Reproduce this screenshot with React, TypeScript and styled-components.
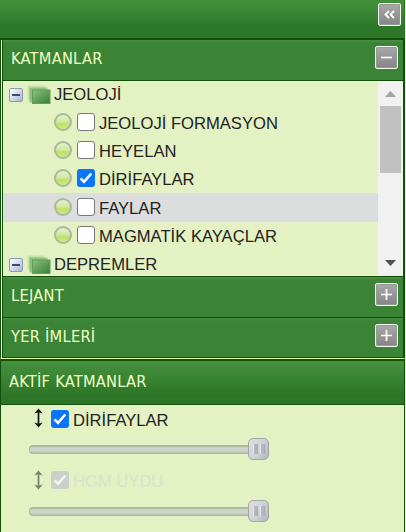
import React from 'react';
import styled, { createGlobalStyle } from 'styled-components';

const Global = createGlobalStyle`
  * { box-sizing: border-box; }
  body { margin: 0; background: #e3f1c3; overflow: hidden; }
`;

const Sidebar = styled.div`
  width: 406px;
  height: 532px;
  display: flex;
  flex-direction: column;
  background: #e3f1c3;
  font-family: "Liberation Sans", Arial, sans-serif;
  color: #222;
  padding-right: 1px;
  overflow: hidden;
`;

const TopBar = styled.header`
  flex: 0 0 40px;
  display: flex;
  justify-content: flex-end;
  padding: 3px 3px 0 0;
  border-bottom: 2px solid #134f08;
  border-right: 1px solid #2b7023;
  background: linear-gradient(#43903b 0, #3a8534 14px, #2d7728 26px, #2d7728 100%);
`;

const Accordion = styled.section`
  flex: 0 0 319px;
  display: flex;
  flex-direction: column;
  border-left: 1px solid #12500a;
  border-right: 1px solid #12500a;
  padding-left: 1px;
  border-bottom: 1px solid #e2ffab;
  background: #e2ffab;
`;

const Section = styled.div<{ $h: number }>`
  flex: 0 0 ${p => p.$h}px;
  display: flex;
  flex-direction: column;
  border: solid #12500a;
  border-width: 0 1px 1px 1px;
`;

const SectionHeader = styled.div<{ $h: number }>`
  flex: 0 0 ${p => p.$h}px;
  display: flex;
  align-items: flex-start;
  justify-content: space-between;
  padding: 6px 5px 0 8px;
  background: linear-gradient(#499044 0, #3b8335 3px, #3b8335 100%);
`;

const Title = styled.h2`
  margin: 0;
  font: 400 16.3px/25px "DejaVu Sans Condensed", "DejaVu Sans", sans-serif;
  font-stretch: condensed;
  letter-spacing: 0.25px;
  color: #efffc5;
  white-space: nowrap;
`;

const ToolButton = styled.button`
  width: 23px;
  height: 23px;
  padding: 0;
  border: 1px solid #f4f7f2;
  border-radius: 2px;
  background: linear-gradient(#a9a9a9, #858585);
  box-shadow: inset 0 0 0 1px #989898;
  display: flex;
  align-items: center;
  justify-content: center;
`;

const TreeView = styled.div`
  flex: 0 0 195px;
  border-top: 1px solid #12500a;
  display: flex;
  overflow: hidden;
`;

const Tree = styled.div`
  flex: 1;
  overflow: hidden;
  background: #e3f1c3;
`;

const GroupRow = styled.div`
  height: 27px;
  display: flex;
  align-items: center;
  padding-left: 6px;
  &:last-child { margin-top: 1.5px; }
`;

const LayerRow = styled.div<{ $hover?: boolean }>`
  height: 28.4px;
  display: flex;
  align-items: center;
  padding-left: 51px;
  background: ${p => (p.$hover ? '#dcdddf' : 'transparent')};
`;

const Label = styled.span<{ $faded?: boolean }>`
  margin-top: 3px;
  font-size: 16.6px;
  line-height: 20px;
  white-space: nowrap;
  color: ${p => (p.$faded ? '#dbe3cf' : '#222')};
`;

const GroupLabel = styled(Label)`
  margin: 0 0 0 3px;
`;

const Expander = styled.span`
  width: 14px;
  height: 14px;
  margin: 1px 4px 0 0;
  border: 1px solid #8c98b8;
  border-radius: 2px;
  background: linear-gradient(135deg, #fff, #a9b6d2);
  display: flex;
  align-items: center;
  justify-content: center;
  &::after { content: ''; width: 8px; height: 2px; background: #3c4c70; }
`;

const Bulb = styled.span`
  width: 18px;
  height: 18px;
  margin: 0 5px 1px 0;
  border: 2px solid #abb99b;
  border-radius: 50%;
  background: linear-gradient(#e6f0cd 0, #d5e9a5 45%, #bfe068 65%, #d1ee88 100%);
`;

const CheckFrame = styled.span<{ $on?: boolean; $off?: boolean }>`
  width: 18px;
  height: 18px;
  margin: 0 4px 1px 0;
  border-radius: 3px;
  display: flex;
  background: ${p => (p.$off ? '#cdcfca' : p.$on ? '#0875fb' : '#fff')};
  border: ${p => (p.$on ? '0' : '1.5px solid #777')};
`;

const ScrollTrack = styled.div`
  width: 25px;
  display: flex;
  flex-direction: column;
  align-items: center;
  justify-content: space-between;
  background: #f1f1f1;
`;

const ScrollThumb = styled.div`
  width: 21px;
  height: 67px;
  margin-bottom: auto;
  background: #c1c1c1;
`;

const ActiveHeader = styled.div`
  flex: 0 0 46px;
  border: solid #12500a;
  border-width: 2px 1px 1px 1px;
  padding: 8px 0 0 8px;
  background: linear-gradient(#469040 0, #388331 19px, #2c7526 34px, #2c7526 100%);
`;

const ActiveBody = styled.div`
  flex: 1;
  border: solid #12500a;
  border-width: 0 1px;
  padding: 3px 0 0 28px;
`;

const ActiveLayer = styled.div`
  height: 61.5px;
`;

const ActiveRow = styled.div`
  height: 22px;
  display: flex;
  align-items: center;
  padding-left: 5px;
`;

const SliderRow = styled.div`
  height: 23px;
  margin-top: 8px;
  display: flex;
  align-items: center;
`;

const Rail = styled.div`
  width: 220px;
  height: 9px;
  border: 1px solid #aeb6a4;
  border-top-width: 2px;
  border-right: 0;
  border-radius: 4px 0 0 4px;
  background: linear-gradient(#cbd3c2, #d0d6ca 60%, #b8c0b0);
`;

const Handle = styled.div`
  width: 21px;
  height: 22px;
  margin: -1px 0 0 -1px;
  border: 1px solid #a3a5aa;
  border-radius: 5px;
  background: linear-gradient(120deg, #dedfe2, #d2d3d6 50%, #b4b6ba);
  display: flex;
  align-items: center;
  justify-content: center;
  gap: 2px;
  &::before, &::after {
    content: '';
    width: 3px;
    height: 10px;
    border-left: 1px solid #e8e9ec;
    border-right: 1px solid #a8aaaf;
    background: #b5b7bc;
  }
`;

const MoveIcon = styled.svg<{ $off?: boolean }>`
  margin: 0 8px 2px 0;
  opacity: ${p => (p.$off ? 0.5 : 1)};
`;

const Check = (p: { on?: boolean; off?: boolean }) => (
  <CheckFrame $on={p.on} $off={p.off}>
    {p.on && (
      <svg width="18" height="18" viewBox="0 0 18 18">
        <path d="M3.6 9.3L7 12.8L14.3 4.5" fill="none" stroke={p.off ? '#f5f6f1' : '#fff'} strokeWidth="2.5" />
      </svg>
    )}
  </CheckFrame>
);

const Layers = () => (
  <svg width="24" height="20" viewBox="0 0 24 20">
    <defs>
      <linearGradient id="layer" x1="0" y1="0" x2="1" y2="1">
        <stop offset="0" stopColor="#8fc37c" />
        <stop offset="1" stopColor="#347e38" />
      </linearGradient>
    </defs>
    <rect x="0.5" y="0.5" width="17" height="14" fill="#9bcc85" opacity=".4" />
    <rect x="2.5" y="2.5" width="18" height="15" fill="#69a85c" opacity=".6" />
    <rect x="5.5" y="5" width="17.5" height="13.5" fill="url(#layer)" stroke="#5f9f5a" />
  </svg>
);

const Sign = ({ plus }: { plus?: boolean }) => (
  <svg width="13" height="13" viewBox="0 0 13 13">
    <path d={plus ? 'M1 6.5H12M6.5 1V12' : 'M1 6.5H12'} stroke="#fff" strokeWidth="1.7" />
  </svg>
);

const Arrow = ({ down }: { down?: boolean }) => (
  <svg width="25" height="25" viewBox="0 0 25 25">
    <path d={down ? 'M7 10H18L12.5 16Z' : 'M7 16H18L12.5 10Z'} fill={down ? '#505050' : '#a3a3a3'} />
  </svg>
);

const Group = ({ name }: { name: string }) => (
  <GroupRow><Expander /><Layers /><GroupLabel>{name}</GroupLabel></GroupRow>
);

const layers = [
  { name: 'JEOLOJİ FORMASYON' },
  { name: 'HEYELAN' },
  { name: 'DİRİFAYLAR', on: true },
  { name: 'FAYLAR', hover: true },
  { name: 'MAGMATİK KAYAÇLAR' },
];

const Active = ({ name, off }: { name: string; off?: boolean }) => (
  <ActiveLayer>
    <ActiveRow>
      <MoveIcon $off={off} width="9" height="20" viewBox="0 0 9 20">
        <path d="M4.5 3V17" stroke="#111" strokeWidth="1.7" />
        <path d="M.3 5.5L4.5 .5L8.7 5.5L4.5 4.2ZM.3 14.5L4.5 19.5L8.7 14.5L4.5 15.8Z" fill="#111" />
      </MoveIcon>
      <Check on off={off} />
      <Label $faded={off}>{name}</Label>
    </ActiveRow>
    <SliderRow><Rail /><Handle /></SliderRow>
  </ActiveLayer>
);

export default function App() {
  return (
    <Sidebar>
      <Global />
      <TopBar>
        <ToolButton>
          <svg width="13" height="13" viewBox="0 0 13 13">
            <path d="M6 3L2.5 6.5L6 10M11 3L7.5 6.5L11 10" fill="none" stroke="#fff" strokeWidth="1.9" />
          </svg>
        </ToolButton>
      </TopBar>
      <Accordion>
        <Section $h={237}>
          <SectionHeader $h={40}><Title>KATMANLAR</Title><ToolButton><Sign /></ToolButton></SectionHeader>
          <TreeView>
            <Tree>
              <Group name="JEOLOJİ" />
              {layers.map(l => (
                <LayerRow key={l.name} $hover={l.hover}>
                  <Bulb /><Check on={l.on} /><Label>{l.name}</Label>
                </LayerRow>
              ))}
              <Group name="DEPREMLER" />
            </Tree>
            <ScrollTrack><Arrow /><ScrollThumb /><Arrow down /></ScrollTrack>
          </TreeView>
        </Section>
        <Section $h={41}>
          <SectionHeader $h={40}><Title>LEJANT</Title><ToolButton><Sign plus /></ToolButton></SectionHeader>
        </Section>
        <Section $h={40}>
          <SectionHeader $h={39}><Title>YER İMLERİ</Title><ToolButton><Sign plus /></ToolButton></SectionHeader>
        </Section>
      </Accordion>
      <ActiveHeader><Title>AKTİF KATMANLAR</Title></ActiveHeader>
      <ActiveBody>
        <Active name="DİRİFAYLAR" />
        <Active name="HGM UYDU" off />
      </ActiveBody>
    </Sidebar>
  );
}
